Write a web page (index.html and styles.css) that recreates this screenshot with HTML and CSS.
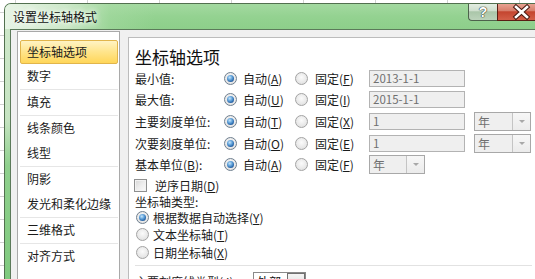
FILE: index.html
```html
<!DOCTYPE html>
<html lang="zh-CN">
<head>
<meta charset="utf-8">
<title>设置坐标轴格式</title>
<link rel="stylesheet" href="styles.css">
</head>
<body>
<div class="dialog">
  <div class="titlebar">
    <div class="title">设置坐标轴格式</div>
    <div class="caption-btns">
      <div class="cbtn help">?</div>
      <div class="cbtn close">
        <svg width="46" height="18" viewBox="0 0 46 18">
          <path d="M18 4 L29 14 M29 4 L18 14" stroke="#4a1a12" stroke-width="4.6" stroke-linecap="square" fill="none"/>
          <path d="M18 4 L29 14 M29 4 L18 14" stroke="#ffffff" stroke-width="2.6" stroke-linecap="square" fill="none"/>
        </svg>
      </div>
    </div>
  </div>
  <div class="client">
    <ul class="nav">
      <li class="item sel">坐标轴选项</li>
      <li class="item sep">数字</li>
      <li class="item sep">填充</li>
      <li class="item">线条颜色</li>
      <li class="item sep">线型</li>
      <li class="item">阴影</li>
      <li class="item sep">发光和柔化边缘</li>
      <li class="item sep">三维格式</li>
      <li class="item">对齐方式</li>
    </ul>
    <div class="pane">
      <h2 class="heading">坐标轴选项</h2>
      <div class="row r1">
        <span class="label">最小值:</span>
        <span class="opt auto"><i class="radio on"></i>自动(<u>A</u>)</span>
        <span class="opt fixed"><i class="radio"></i>固定(<u>F</u>)</span>
        <span class="field">2013-1-1</span>
      </div>
      <div class="row r2">
        <span class="label">最大值:</span>
        <span class="opt auto"><i class="radio on"></i>自动(<u>U</u>)</span>
        <span class="opt fixed"><i class="radio"></i>固定(<u>I</u>)</span>
        <span class="field">2015-1-1</span>
      </div>
      <div class="row r3">
        <span class="label">主要刻度单位:</span>
        <span class="opt auto"><i class="radio on"></i>自动(<u>T</u>)</span>
        <span class="opt fixed"><i class="radio"></i>固定(<u>X</u>)</span>
        <span class="field">1</span>
        <span class="combo unit"><span class="ctext">年</span><span class="cbtn-drop"><i class="tri"></i></span></span>
      </div>
      <div class="row r4">
        <span class="label">次要刻度单位:</span>
        <span class="opt auto"><i class="radio on"></i>自动(<u>O</u>)</span>
        <span class="opt fixed"><i class="radio"></i>固定(<u>E</u>)</span>
        <span class="field">1</span>
        <span class="combo unit"><span class="ctext">年</span><span class="cbtn-drop"><i class="tri"></i></span></span>
      </div>
      <div class="row r5">
        <span class="label">基本单位(<u>B</u>):</span>
        <span class="opt auto"><i class="radio on"></i>自动(<u>A</u>)</span>
        <span class="opt fixed"><i class="radio"></i>固定(<u>F</u>)</span>
        <span class="combo base"><span class="ctext">年</span><span class="cbtn-drop"><i class="tri"></i></span></span>
      </div>
      <div class="check-row"><i class="checkbox"></i>逆序日期(<u>D</u>)</div>
      <div class="group-label">坐标轴类型:</div>
      <div class="type-opt t1"><i class="radio on"></i>根据数据自动选择(<u>Y</u>)</div>
      <div class="type-opt t2"><i class="radio"></i>文本坐标轴(<u>T</u>)</div>
      <div class="type-opt t3"><i class="radio"></i>日期坐标轴(<u>X</u>)</div>
      <div class="divider"></div>
      <div class="row tick-row">
        <span class="label wide">主要刻度线类型(<u>J</u>):</span>
        <span class="combo enabled"><span class="ctext">外部</span><span class="cbtn-drop"><i class="tri"></i></span></span>
      </div>
    </div>
  </div>
</div>
</body>
</html>
```

FILE: styles.css
```css
* { box-sizing: border-box; margin: 0; padding: 0; }

html, body {
  width: 535px;
  height: 279px;
  overflow: hidden;
}

body {
  font-family: "Noto Sans CJK SC", "Noto Sans", sans-serif;
  font-size: 12px;
  color: #1b1b1b;
  background-color: #ffffff;
  background-image:
    repeating-linear-gradient(90deg, transparent 0 15px, #d2d2d2 15px 16px, transparent 16px 72px),
    repeating-linear-gradient(180deg, transparent 0 12px, #d2d2d2 12px 13px, transparent 13px 23px);
}

u { text-decoration: underline; text-underline-offset: 1px; }

/* ---------- window frame ---------- */
.dialog {
  margin: 3px 0 0 4px;
  width: 546px;
  height: 290px;
  border: 1px solid #52704f;
  border-bottom: 0;
  border-radius: 7px 7px 0 0;
  background: linear-gradient(180deg, #cfe8cb 0, #c6e4c2 40%, #8fd08d 56%, #7ec97d 100%);
  display: flex;
  flex-direction: column;
  overflow: hidden;
}

.titlebar {
  height: 25px;
  flex: none;
  display: flex;
  background:
    linear-gradient(90deg, rgba(236,246,234,0.95) 0, rgba(214,236,210,0.85) 60px, rgba(170,220,166,0.45) 105px, rgba(140,208,138,0) 150px),
    linear-gradient(180deg, #a3d9a0 0, #94d291 50%, #8dcf8a 100%);
}

.title {
  flex: 1;
  padding-left: 8px;
  line-height: 26px;
  font-size: 12px;
  color: #111;
  text-shadow: 0 0 6px #fff, 0 0 6px #fff;
}

.caption-btns {
  display: flex;
  margin-top: -1px;
  margin-right: 6px;
  height: 18px;
}

.cbtn {
  height: 18px;
  border: 1px solid #4d624c;
  border-top: 0;
}

.help {
  width: 29px;
  border-right: 0;
  border-radius: 0 0 0 4px;
  background: linear-gradient(180deg, #e5efe4 0, #cfdfce 45%, #aac6a9 52%, #bcd3bb 100%);
  font-family: "Liberation Sans", sans-serif;
  font-weight: bold;
  font-size: 14px;
  line-height: 18px;
  text-align: center;
  color: #fff;
  text-shadow: 0 0 1px #2f3b2f, 0 0 1px #2f3b2f, 0 0 1px #2f3b2f;
}

.close {
  width: 46px;
  border-color: #5a1e14;
  border-radius: 0 0 4px 0;
  background: linear-gradient(180deg, #eaa797 0, #d7806d 45%, #c4452f 52%, #d35f48 100%);
}

.close svg { display: block; }

/* ---------- client area ---------- */
.client {
  flex: 1;
  margin-left: 5px;
  border-top: 1px solid #5c7a5a;
  border-left: 1px solid #5c7a5a;
  background: #f0f0f0;
  display: flex;
  align-items: flex-start;
  gap: 8px;
  padding: 1px 0 0 6px;
}

.nav {
  width: 103px;
  height: 270px;
  flex: none;
  list-style: none;
  background: #ffffff;
  border: 1px solid #a9a9a9;
  padding: 8px 1px 0 2px;
}

.item {
  height: 25px;
  line-height: 24px;
  padding-left: 7px;
  white-space: nowrap;
}

.item.sep {
  height: 26px;
  border-bottom: 1px solid #e6e6e6;
}

.item.sel {
  height: 24px;
  line-height: 22px;
  padding-left: 6px;
  border: 1px solid #e1b54c;
  border-radius: 2px;
  background: linear-gradient(180deg, #fff3c4 0, #ffe690 45%, #ffd659 100%);
}

.pane {
  flex: 1;
  height: 270px;
  margin-top: 6px;
  background: #ffffff;
  border: 1px solid #bcbcbc;
  padding: 7px 0 0 6px;
}

.heading {
  font-size: 17px;
  font-weight: normal;
  line-height: 23px;
  color: #111;
}

.row {
  display: flex;
  align-items: center;
}

.r1 { height: 20px; }
.r2 { height: 22px; }
.r3 { height: 22px; }
.r4 { height: 22px; }
.r5 { height: 21px; }

.label {
  width: 89px;
  flex: none;
  white-space: nowrap;
}

.label.wide { width: 118px; }

.opt {
  display: flex;
  align-items: center;
  flex: none;
  white-space: nowrap;
}

.opt.auto { width: 71px; }
.opt.fixed { width: 74px; }
.opt.auto .radio { margin-right: 6px; }
.opt.fixed .radio { margin-right: 7px; }

/* radio buttons */
.radio {
  display: inline-block;
  position: relative;
  width: 13px;
  height: 13px;
  flex: none;
  border-radius: 50%;
  border: 1px solid #a3a3a3;
  background: radial-gradient(circle at 50% 40%, #fbfbfb 0, #e8e8e8 60%, #d8d8d8 100%);
}

.radio.on {
  border-color: #6f7f8f;
}

.radio.on::after {
  content: "";
  position: absolute;
  left: 2px;
  top: 2px;
  width: 7px;
  height: 7px;
  border-radius: 50%;
  background: radial-gradient(circle at 40% 35%, #c8e6fb 0, #5d9fd8 40%, #1f5a9e 75%, #163e70 100%);
}

/* inputs */
.field {
  width: 96px;
  height: 17px;
  flex: none;
  border: 1px solid #b3b3b3;
  background: #efefef;
  color: #707070;
  padding-left: 3px;
  line-height: 15px;
  font-size: 11.5px;
}

.combo {
  display: flex;
  flex: none;
  height: 19px;
  border: 1px solid #a8a8a8;
  background: #efefef;
  color: #707070;
}

.combo.unit { width: 57px; margin-left: 9px; }
.combo.base { width: 56px; }

.ctext {
  flex: 1;
  padding-left: 3px;
  line-height: 17px;
}

.cbtn-drop {
  width: 18px;
  flex: none;
  border-left: 1px solid #c4c4c4;
  background: linear-gradient(180deg, #f7f7f7, #ebebeb);
  display: flex;
  align-items: center;
  justify-content: center;
}

.tri {
  width: 0;
  height: 0;
  border-left: 3px solid transparent;
  border-right: 3px solid transparent;
  border-top: 3px solid #a8a8a8;
}

.combo.enabled {
  width: 53px;
  background: #ffffff;
  color: #111;
  border-color: #8a8a8a;
}

.combo.enabled .cbtn-drop {
  border: 1px solid #707070;
  background: linear-gradient(180deg, #f4f4f4, #dcdcdc);
}

.combo.enabled .tri {
  border-top-color: #111;
  border-left-width: 3.5px;
  border-right-width: 3.5px;
  border-top-width: 4px;
}

/* checkbox row */
.check-row {
  height: 20px;
  display: flex;
  align-items: center;
  margin-left: -1px;
}

.checkbox {
  width: 13px;
  height: 13px;
  flex: none;
  margin-right: 8px;
  border: 1px solid #8e8f8f;
  background: linear-gradient(135deg, #d6d6d6 0, #ededed 50%, #fbfbfb 100%);
  box-shadow: inset 0 0 0 1px #f2f2f2;
}

.group-label {
  height: 14px;
  line-height: 14px;
}

.type-opt {
  display: flex;
  align-items: center;
  height: 17px;
  padding-left: 1px;
}

.type-opt.t3 { height: 18px; }
.type-opt .radio { margin-right: 4px; }

.divider {
  width: 397px;
  height: 1px;
  margin-top: 4px;
  background: #e2e2e2;
}

.tick-row {
  padding-top: 6px;
  align-items: flex-start;
}

.tick-row .label { line-height: 19px; }
```
